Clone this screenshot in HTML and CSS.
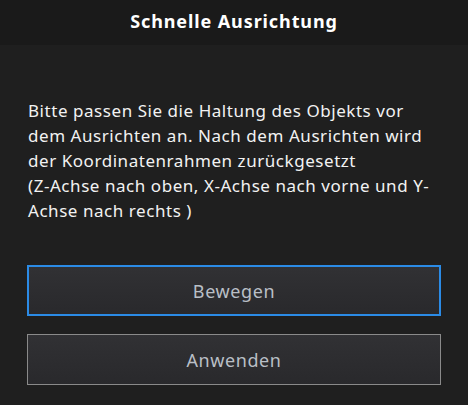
FILE: index.html
```html
<!DOCTYPE html>
<html lang="de">
<head>
  <meta charset="UTF-8">
  <meta name="viewport" content="width=device-width, initial-scale=1.0">
  <title>Schnelle Ausrichtung</title>
  <link rel="stylesheet" href="styles.css">
</head>
<body>
  <div class="dialog">
    <header class="dialog-title">Schnelle Ausrichtung</header>

    <div class="dialog-body">
      <p class="hint">Bitte passen Sie die Haltung des Objekts vor dem Ausrichten an. Nach dem Ausrichten wird<br>der Koordinatenrahmen zurückgesetzt<br>(Z-Achse nach oben, X-Achse nach vorne und Y-Achse nach rechts )</p>

      <div class="actions">
        <button class="btn btn-active">Bewegen</button>
        <button class="btn">Anwenden</button>
      </div>
    </div>
  </div>
</body>
</html>
```

FILE: styles.css
```css
body {
  margin: 0;
  background-color: #1f1f1f;
  font-family: 'Noto Sans', 'Open Sans', sans-serif;
}
.dialog {
  width: 468px;
  height: 405px;
  background-color: #1f1f1f;
}
.dialog-title {
  height: 45px;
  line-height: 43px;
  background-color: #1a1a1a;
  color: #ffffff;
  font-size: 18px;
  font-weight: bold;
  letter-spacing: 0.9px;
  text-align: center;
}
.dialog-body {
  padding: 53px 27px 0 27px;
}
.hint {
  margin: 0 0 42px 1px;
  width: 415px;
  color: #f2f2f2;
  font-size: 17px;
  letter-spacing: 0.55px;
  line-height: 25px;
}
.actions {
  display: flex;
  flex-direction: column;
  gap: 18px;
}
.btn {
  box-sizing: border-box;
  width: 414px;
  height: 51px;
  border: 1px solid #8a8a8a;
  background: linear-gradient(#313134, #29292c);
  color: #b9bfc6;
  font-family: 'Noto Sans', 'Open Sans', sans-serif;
  font-size: 18px;
  letter-spacing: 0.6px;
  cursor: pointer;
}
.btn-active {
  border: 2px solid #2b8be6;
}
```
